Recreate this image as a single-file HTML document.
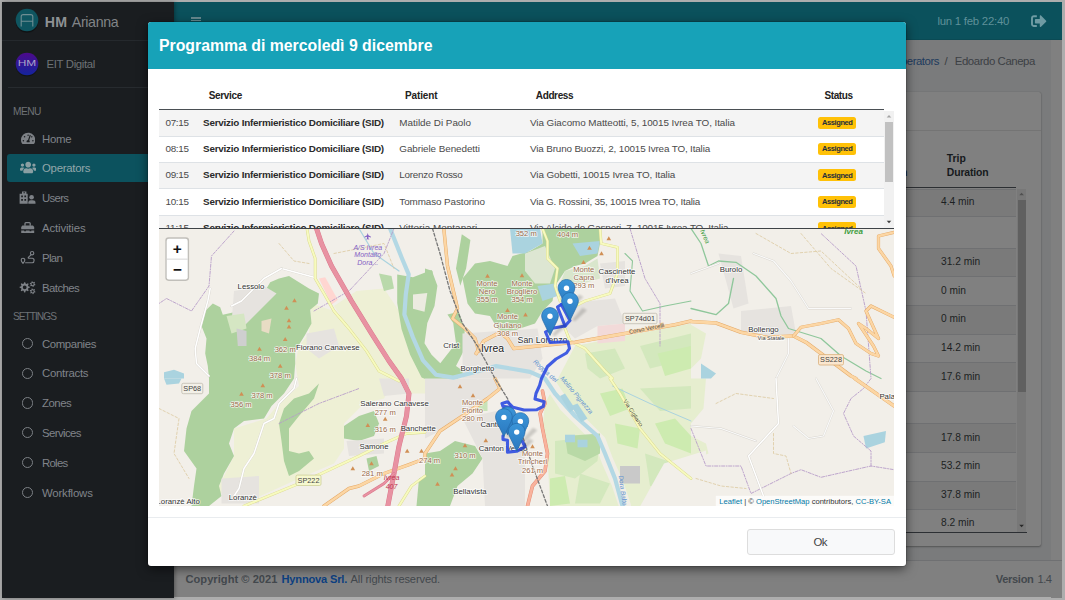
<!DOCTYPE html><html lang="it"><head><meta charset="utf-8"><title>HM Arianna</title><style>
html,body{margin:0;padding:0}body{width:1065px;height:600px;overflow:hidden;position:relative;background:#a9a9a9;font-family:"Liberation Sans", sans-serif}
.b{position:absolute;box-sizing:border-box}.t{position:absolute;white-space:nowrap;line-height:1}
svg{position:absolute;overflow:hidden}
</style></head><body>
<div class="b" style="left:0.00px;top:0.00px;width:1065.00px;height:600.00px;background:#adadad;"></div>
<div class="b" style="left:174.00px;top:40.00px;width:876.50px;height:519.60px;background:#7a7b7c;"></div>
<div class="b" style="left:1050.50px;top:40.00px;width:11.50px;height:557.50px;background:#808080;"></div>
<div class="b" style="left:174.00px;top:2.00px;width:888.00px;height:38.30px;background:#0b515c;border-bottom:1px solid #0a4a54"></div>
<div class="b" style="left:191.00px;top:16.90px;width:9.80px;height:1.70px;background:#66898f;"></div>
<div class="b" style="left:191.00px;top:19.90px;width:9.80px;height:1.60px;background:#66898f;"></div>
<span class="t" style="left:937.40px;top:15.75px;font-size:11.40px;color:#5f9099;letter-spacing:-0.242px;">lun 1 feb 22:40</span>
<svg style="left:1031px;top:14.6px" width="15.6" height="12.4" viewBox="0 0 512 408"><path fill="#6f9ba3" d="M497 221 329 389c-15 15-41 4.500-41-17v-96H152c-13.300 0-24-10.700-24-24v-96c0-13.300 10.700-24 24-24h136V36c0-21.400 25.900-32 41-17l168 168c9.300 9.400 9.300 24.600 0 34zM192 384v-40c0-6.600-5.400-12-12-12H96c-17.700 0-32-14.300-32-32V108c0-17.700 14.300-32 32-32h84c6.600 0 12-5.400 12-12V24c0-6.600-5.400-12-12-12H96C43 12 0 55 0 108v192c0 53 43 96 96 96h84c6.600 0 12-5.400 12-12z"/></svg>
<span class="t" style="left:892.50px;top:56.35px;font-size:11.40px;color:#1d3a5c;letter-spacing:-0.465px;">Operators</span>
<span class="t" style="left:944.50px;top:56.35px;font-size:11.40px;color:#3a3e42;">/</span>
<span class="t" style="left:954.80px;top:56.35px;font-size:11.40px;color:#3c4044;letter-spacing:-0.429px;">Edoardo Canepa</span>
<div class="b" style="left:200.00px;top:91.50px;width:840.80px;height:454.30px;background:#808080;border-radius:2px;box-shadow:0 0 1px rgba(0,0,0,.25),0 1px 2px rgba(0,0,0,.3)"></div>
<div class="b" style="left:200.00px;top:129.60px;width:840.80px;height:0.80px;background:#747474;"></div>
<span class="t" style="left:946.80px;top:153.50px;font-size:10.40px;color:#16191c;font-weight:700;">Trip</span>
<span class="t" style="left:946.80px;top:168.00px;font-size:10.40px;color:#16191c;font-weight:700;letter-spacing:-0.132px;">Duration</span>
<span class="t" style="left:901.00px;top:168.00px;font-size:10.40px;color:#16191c;font-weight:700;">n</span>
<div class="b" style="left:880.00px;top:187.20px;width:135.50px;height:1.30px;background:#2c2f33;"></div>
<div class="b" style="left:880.00px;top:188.50px;width:135.50px;height:27.00px;background:#7a7a7a;border-top:1px solid #6f7072"></div>
<span class="t" style="left:941.00px;top:196.97px;font-size:10.20px;color:#1c1f22;">4.4 min</span>
<div class="b" style="left:880.00px;top:215.50px;width:135.50px;height:32.20px;background:#808080;border-top:1px solid #6f7072"></div>
<div class="b" style="left:880.00px;top:247.70px;width:135.50px;height:28.50px;background:#7a7a7a;border-top:1px solid #6f7072"></div>
<span class="t" style="left:941.00px;top:256.92px;font-size:10.20px;color:#1c1f22;">31.2 min</span>
<div class="b" style="left:880.00px;top:276.20px;width:135.50px;height:28.80px;background:#808080;border-top:1px solid #6f7072"></div>
<span class="t" style="left:941.00px;top:285.57px;font-size:10.20px;color:#1c1f22;">0 min</span>
<div class="b" style="left:880.00px;top:305.00px;width:135.50px;height:28.60px;background:#7a7a7a;border-top:1px solid #6f7072"></div>
<span class="t" style="left:941.00px;top:314.27px;font-size:10.20px;color:#1c1f22;">0 min</span>
<div class="b" style="left:880.00px;top:333.60px;width:135.50px;height:28.70px;background:#808080;border-top:1px solid #6f7072"></div>
<span class="t" style="left:941.00px;top:342.92px;font-size:10.20px;color:#1c1f22;">14.2 min</span>
<div class="b" style="left:880.00px;top:362.30px;width:135.50px;height:28.70px;background:#7a7a7a;border-top:1px solid #6f7072"></div>
<span class="t" style="left:941.00px;top:371.62px;font-size:10.20px;color:#1c1f22;">17.6 min</span>
<div class="b" style="left:880.00px;top:391.00px;width:135.50px;height:32.20px;background:#808080;border-top:1px solid #6f7072"></div>
<div class="b" style="left:880.00px;top:423.20px;width:135.50px;height:28.80px;background:#7a7a7a;border-top:1px solid #6f7072"></div>
<span class="t" style="left:941.00px;top:432.57px;font-size:10.20px;color:#1c1f22;">17.8 min</span>
<div class="b" style="left:880.00px;top:452.00px;width:135.50px;height:28.60px;background:#808080;border-top:1px solid #6f7072"></div>
<span class="t" style="left:941.00px;top:461.27px;font-size:10.20px;color:#1c1f22;">53.2 min</span>
<div class="b" style="left:880.00px;top:480.60px;width:135.50px;height:28.60px;background:#7a7a7a;border-top:1px solid #6f7072"></div>
<span class="t" style="left:941.00px;top:489.87px;font-size:10.20px;color:#1c1f22;">37.8 min</span>
<div class="b" style="left:880.00px;top:509.20px;width:135.50px;height:23.20px;background:#808080;border-top:1px solid #6f7072"></div>
<span class="t" style="left:941.00px;top:517.97px;font-size:10.20px;color:#1c1f22;">8.2 min</span>
<div class="b" style="left:880.00px;top:532.20px;width:147.00px;height:1.00px;background:#2c2f33;"></div>
<div class="b" style="left:1017.00px;top:188.60px;width:9.20px;height:343.60px;background:#787878;"></div>
<div class="b" style="left:1017.60px;top:199.70px;width:8.00px;height:192.10px;background:#606060;"></div>
<svg style="left:1017px;top:189px" width="9.200" height="10" viewBox="0 0 9.200 10"><path d="M2.300 6.200 4.600 3.800 6.900 6.200z" fill="#505050"/></svg>
<svg style="left:1017px;top:521px" width="9.200" height="10" viewBox="0 0 9.200 10"><path d="M2.300 3.800 4.600 6.200 6.900 3.800z" fill="#282828"/></svg>
<div class="b" style="left:174.00px;top:559.60px;width:888.00px;height:37.90px;background:#808080;border-top:1px solid #6f7072"></div>
<span class="t" style="left:185.50px;top:574.00px;font-size:11.10px;color:#43484d;font-weight:700;letter-spacing:0.034px;">Copyright © 2021</span>
<span class="t" style="left:281.50px;top:574.00px;font-size:11.10px;color:#0c3f80;font-weight:700;letter-spacing:-0.179px;">Hynnova Srl.</span>
<span class="t" style="left:350.60px;top:574.00px;font-size:11.10px;color:#43484d;letter-spacing:-0.126px;">All rights reserved.</span>
<span class="t" style="left:995.70px;top:574.00px;font-size:11.10px;color:#43484d;font-weight:700;letter-spacing:-0.315px;">Version</span>
<span class="t" style="left:1037.50px;top:574.00px;font-size:11.10px;color:#43484d;letter-spacing:-0.544px;">1.4</span>
<div class="b" style="left:2.00px;top:2.00px;width:172.00px;height:595.50px;background:#1a1d20;box-shadow:1px 0 4px rgba(0,0,0,.35)"></div>
<div class="b" style="left:2.00px;top:40.20px;width:172.00px;height:0.80px;background:#25292d;"></div>
<div class="b" style="left:7.50px;top:86.60px;width:166.50px;height:0.80px;background:#272b2f;"></div>
<svg style="left:14px;top:7.300px" width="26" height="28" viewBox="0 0 26 28"><circle cx="13" cy="14.500" r="11.300" fill="#000" opacity=".35"/><circle cx="13" cy="13" r="11.300" fill="#0f5560"/><path d="M7.200 19.400V9.600q0-2 2-2h7.600q2 0 2 2v9.800M7.200 14.200h11.600" fill="none" stroke="#6f8e93" stroke-width="1.100"/></svg>
<span class="t" style="left:44.80px;top:14.98px;font-size:14.20px;color:#8e9194;font-weight:700;letter-spacing:0.308px;">HM</span>
<span class="t" style="left:71.80px;top:14.98px;font-size:14.20px;color:#818487;letter-spacing:-0.350px;">Arianna</span>
<svg style="left:14px;top:50.500px" width="26" height="28" viewBox="0 0 26 28"><defs><linearGradient id="ug" x1="0" y1="0" x2="0" y2="1"><stop offset="0" stop-color="#4d0a8c"/><stop offset="1" stop-color="#14249c"/></linearGradient></defs><circle cx="13" cy="14.300" r="11.300" fill="#000" opacity=".3"/><circle cx="13" cy="13" r="11.300" fill="url(#ug)"/><text x="13" y="15.400" font-family="Liberation Sans, sans-serif" font-size="8.200" text-anchor="middle" fill="#a9a3c9" textLength="18.500" lengthAdjust="spacingAndGlyphs">HM</text></svg>
<span class="t" style="left:46.50px;top:59.15px;font-size:11.40px;color:#6e7276;letter-spacing:-0.352px;">EIT Digital</span>
<span class="t" style="left:13.00px;top:106.67px;font-size:10.20px;color:#6e7276;letter-spacing:-0.508px;">MENU</span>
<span class="t" style="left:13.00px;top:311.57px;font-size:10.20px;color:#6e7276;letter-spacing:-1.001px;">SETTINGS</span>
<div class="b" style="left:7.00px;top:154.20px;width:160.50px;height:27.70px;background:#0c525e;border-radius:3px"></div>
<span class="t" style="left:42.00px;top:133.75px;font-size:11.40px;color:#80848a;letter-spacing:-0.253px;">Home</span>
<span class="t" style="left:42.00px;top:163.35px;font-size:11.40px;color:#93a7ab;letter-spacing:-0.265px;">Operators</span>
<span class="t" style="left:42.00px;top:193.15px;font-size:11.40px;color:#80848a;letter-spacing:-0.694px;">Users</span>
<span class="t" style="left:42.00px;top:222.95px;font-size:11.40px;color:#80848a;letter-spacing:-0.148px;">Activities</span>
<span class="t" style="left:42.00px;top:252.75px;font-size:11.40px;color:#80848a;letter-spacing:-0.629px;">Plan</span>
<span class="t" style="left:42.00px;top:282.55px;font-size:11.40px;color:#80848a;letter-spacing:-0.570px;">Batches</span>
<span class="t" style="left:42.00px;top:338.65px;font-size:11.40px;color:#80848a;letter-spacing:-0.407px;">Companies</span>
<div class="b" style="left:21.700px;top:337.80px;width:11.200px;height:11.200px;border:1.300px solid #7d8186;border-radius:50%"></div>
<span class="t" style="left:42.00px;top:368.45px;font-size:11.40px;color:#80848a;letter-spacing:-0.276px;">Contracts</span>
<div class="b" style="left:21.700px;top:367.60px;width:11.200px;height:11.200px;border:1.300px solid #7d8186;border-radius:50%"></div>
<span class="t" style="left:42.00px;top:398.25px;font-size:11.40px;color:#80848a;letter-spacing:-0.497px;">Zones</span>
<div class="b" style="left:21.700px;top:397.40px;width:11.200px;height:11.200px;border:1.300px solid #7d8186;border-radius:50%"></div>
<span class="t" style="left:42.00px;top:428.05px;font-size:11.40px;color:#80848a;letter-spacing:-0.614px;">Services</span>
<div class="b" style="left:21.700px;top:427.20px;width:11.200px;height:11.200px;border:1.300px solid #7d8186;border-radius:50%"></div>
<span class="t" style="left:42.00px;top:457.85px;font-size:11.40px;color:#80848a;letter-spacing:-0.729px;">Roles</span>
<div class="b" style="left:21.700px;top:457.00px;width:11.200px;height:11.200px;border:1.300px solid #7d8186;border-radius:50%"></div>
<span class="t" style="left:42.00px;top:487.65px;font-size:11.40px;color:#80848a;letter-spacing:-0.185px;">Workflows</span>
<div class="b" style="left:21.700px;top:486.80px;width:11.200px;height:11.200px;border:1.300px solid #7d8186;border-radius:50%"></div>
<svg style="left:20.700px;top:131.51px" width="14.30" height="12.71" viewBox="0 0 576 512"><path fill="#7d8186" d="M288 32C128.940 32 0 160.940 0 320c0 52.800 14.250 102.260 39.060 144.800 5.610 9.620 16.300 15.200 27.440 15.200h443c11.140 0 21.830-5.580 27.440-15.200C561.750 422.260 576 372.800 576 320c0-159.060-128.940-288-288-288zm0 64c14.710 0 26.580 10.130 30.320 23.650-1.110 2.260-2.640 4.230-3.450 6.670l-9.220 27.670c-5.130 3.490-10.970 6.010-17.640 6.010-17.670 0-32-14.330-32-32S270.330 96 288 96zM96 384c-17.670 0-32-14.330-32-32s14.330-32 32-32 32 14.330 32 32-14.330 32-32 32zm48-160c-17.670 0-32-14.330-32-32s14.330-32 32-32 32 14.330 32 32-14.330 32-32 32zm246.770-72.410l-61.330 184C343.130 347.330 352 364.540 352 384c0 11.720-3.380 22.550-8.880 32H232.880c-5.500-9.450-8.880-20.280-8.880-32 0-33.940 26.500-61.430 59.900-63.590l61.340-184.010c4.170-12.560 17.730-19.450 30.360-15.170 12.570 4.190 19.350 17.790 15.170 30.360zm14.660 57.200l15.520-46.550c3.470-1.290 7.130-2.230 11.050-2.230 17.670 0 32 14.330 32 32s-14.330 32-32 32c-11.380-.010-20.890-6.280-26.570-15.220zM480 384c-17.670 0-32-14.330-32-32s14.330-32 32-32 32 14.330 32 32-14.330 32-32 32z"/></svg>
<svg style="left:19.600px;top:161.28px" width="16.40" height="13.12" viewBox="0 0 640 512"><path fill="#8a9fa3" d="M96 224c35.300 0 64-28.700 64-64s-28.700-64-64-64-64 28.700-64 64 28.700 64 64 64zm448 0c35.300 0 64-28.700 64-64s-28.700-64-64-64-64 28.700-64 64 28.700 64 64 64zm32 32h-64c-17.600 0-33.500 7.100-45.100 18.600 40.300 22.100 68.900 62 75.100 109.400h66c17.700 0 32-14.300 32-32v-32c0-35.300-28.700-64-64-64zm-256 0c61.900 0 112-50.100 112-112S381.900 32 320 32 208 82.100 208 144s50.100 112 112 112zm76.800 32h-8.300c-20.800 10-43.900 16-68.500 16s-47.600-6-68.500-16h-8.300C179.600 288 128 339.600 128 403.200V432c0 26.500 21.500 48 48 48h288c26.500 0 48-21.500 48-48v-28.800c0-63.600-51.600-115.200-115.200-115.200zm-223.700-13.400C161.500 263.100 145.600 256 128 256H64c-35.300 0-64 28.700-64 64v32c0 17.700 14.300 32 32 32h65.900c6.300-47.400 34.900-87.300 75.200-109.400z"/></svg>
<svg style="left:19px;top:190px" width="18" height="15" viewBox="0 0 18 15"><path fill="#7d8186" fill-rule="evenodd" d="M3 1.600h4.400v2.200H8.700v9.900H.6V3.800H3z M2.200 5.600h1.700v1.700H2.200z M5.400 5.600h1.700v1.700H5.400z M2.200 9h1.700v1.700H2.200z M5.400 9h1.700v1.700H5.400z M4.500 2.200h1.400v1H4.500z"/><circle cx="12.600" cy="7.200" r="2.300" fill="#7d8186"/><path fill="#7d8186" d="M9.300 13.700v-1.200q0-2.300 2.300-2.300h2q2.900 0 2.900 2.300v1.200z"/></svg>
<svg style="left:20px;top:220px" width="16" height="15" viewBox="0 0 16 15"><path fill="none" stroke="#7d8186" stroke-width="1.300" d="M5 5.800V3.500q0-.9.900-.9h3.400q.9 0 .9.900v2.300"/><path fill="#7d8186" d="M2.400 5.500h10.600l1.200 1.400v2.300H1.200V6.900z M1.200 10.400h3v.9h1.700v-.9h3.700v.9h1.700v-.9h2.900v2.700H1.200z"/></svg>
<svg style="left:20px;top:250px" width="16" height="15" viewBox="0 0 16 15"><g fill="none" stroke="#7d8186" stroke-width="1.150" stroke-linecap="round" stroke-linejoin="round"><circle cx="12.100" cy="3.200" r="1.700"/><path d="M11 4.800 8.600 7.200q-.9 1 .5 1h3.100q1.900 0 1.900 2.200t-1.900 2.400H5.600"/><path d="M3 13.400Q1.100 11.300 1.200 10a1.800 1.800 0 0 1 3.600 0Q4.900 11.300 3 13.400z"/></g></svg>
<svg style="left:19px;top:280px" width="18" height="15" viewBox="0 0 18 15"><path fill="#7d8186" fill-rule="evenodd" d="M10.78 6.80L10.78 7.80L9.24 8.37L8.96 9.04L9.64 10.54L8.94 11.24L7.44 10.56L6.77 10.84L6.20 12.38L5.20 12.38L4.63 10.84L3.96 10.56L2.46 11.24L1.76 10.54L2.44 9.04L2.16 8.37L0.62 7.80L0.62 6.80L2.16 6.23L2.44 5.56L1.76 4.06L2.46 3.36L3.96 4.04L4.63 3.76L5.20 2.22L6.20 2.22L6.77 3.76L7.44 4.04L8.94 3.36L9.64 4.06L8.96 5.56L9.24 6.23zM3.80 7.30a1.90 1.90 0 1 0 3.80 0a1.90 1.90 0 1 0 -3.80 0zM16.46 4.59L16.23 5.31L15.14 5.38L14.76 5.73L14.61 6.82L13.87 6.99L13.26 6.07L12.76 5.92L11.75 6.33L11.23 5.78L11.72 4.79L11.61 4.29L10.74 3.61L10.97 2.89L12.06 2.82L12.44 2.47L12.59 1.38L13.33 1.21L13.94 2.13L14.44 2.28L15.45 1.87L15.97 2.42L15.48 3.41L15.59 3.91zM12.50 4.10a1.10 1.10 0 1 0 2.20 0a1.10 1.10 0 1 0 -2.20 0zM16.46 11.79L16.23 12.51L15.14 12.58L14.76 12.93L14.61 14.02L13.87 14.19L13.26 13.27L12.76 13.12L11.75 13.53L11.23 12.98L11.72 11.99L11.61 11.49L10.74 10.81L10.97 10.09L12.06 10.02L12.44 9.67L12.59 8.58L13.33 8.41L13.94 9.33L14.44 9.48L15.45 9.07L15.97 9.62L15.48 10.61L15.59 11.11zM12.50 11.30a1.10 1.10 0 1 0 2.20 0a1.10 1.10 0 1 0 -2.20 0z"/></svg>
<div class="b" style="left:147.50px;top:21.50px;width:758.80px;height:544.80px;background:#fff;border-radius:3px;box-shadow:0 3px 11px rgba(0,0,0,.55),0 0 0 .5px rgba(0,0,0,.25)"></div>
<div class="b" style="left:147.50px;top:21.50px;width:758.80px;height:47.50px;background:#17a2b8;border-radius:3px 3px 0 0"></div>
<span class="t" style="left:159.00px;top:37.83px;font-size:15.80px;color:#fff;font-weight:700;letter-spacing:0.012px;">Programma di mercoledì 9 dicembre</span>
<span class="t" style="left:208.80px;top:90.83px;font-size:10.00px;color:#222;font-weight:700;letter-spacing:-0.355px;">Service</span>
<span class="t" style="left:404.90px;top:90.83px;font-size:10.00px;color:#222;font-weight:700;letter-spacing:-0.106px;">Patient</span>
<span class="t" style="left:535.80px;top:90.83px;font-size:10.00px;color:#222;font-weight:700;letter-spacing:-0.374px;">Address</span>
<span class="t" style="left:824.40px;top:90.83px;font-size:10.00px;color:#222;font-weight:700;letter-spacing:-0.361px;">Status</span>
<div class="b" style="left:159.00px;top:108.80px;width:724.60px;height:1.40px;background:#4a4f54;"></div>
<div class="b" style="left:159px;top:110.200px;width:735.250px;height:118.300px;overflow:hidden">
<div class="b" style="left:0.00px;top:0.00px;width:724.60px;height:25.40px;background:#f4f4f4;"></div>
<span class="t" style="left:6.40px;top:7.82px;font-size:9.90px;color:#4a4a4a;letter-spacing:-0.255px;">07:15</span>
<span class="t" style="left:44.10px;top:7.82px;font-size:9.90px;color:#2a2a2a;font-weight:700;letter-spacing:-0.229px;">Servizio Infermieristico Domiciliare (SID)</span>
<span class="t" style="left:240.30px;top:7.82px;font-size:9.90px;color:#4a4a4a;letter-spacing:-0.012px;">Matilde Di Paolo</span>
<span class="t" style="left:371.00px;top:7.82px;font-size:9.90px;color:#4a4a4a;letter-spacing:-0.064px;">Via Giacomo Matteotti, 5, 10015 Ivrea TO, Italia</span>
<div class="b" style="left:659.40px;top:6.90px;width:37.40px;height:12.00px;background:#ffc107;border-radius:2.500px"></div>
<span class="t" style="left:663.00px;top:9.25px;font-size:7.50px;color:#1f2d3d;font-weight:700;letter-spacing:-0.407px;">Assigned</span>
<div class="b" style="left:0.00px;top:25.40px;width:724.60px;height:26.40px;background:#fff;border-top:1px solid #dee2e6"></div>
<span class="t" style="left:6.40px;top:33.72px;font-size:9.90px;color:#4a4a4a;letter-spacing:-0.255px;">08:15</span>
<span class="t" style="left:44.10px;top:33.72px;font-size:9.90px;color:#2a2a2a;font-weight:700;letter-spacing:-0.229px;">Servizio Infermieristico Domiciliare (SID)</span>
<span class="t" style="left:240.30px;top:33.72px;font-size:9.90px;color:#4a4a4a;letter-spacing:-0.073px;">Gabriele Benedetti</span>
<span class="t" style="left:371.00px;top:33.72px;font-size:9.90px;color:#4a4a4a;letter-spacing:-0.154px;">Via Bruno Buozzi, 2, 10015 Ivrea TO, Italia</span>
<div class="b" style="left:659.40px;top:32.80px;width:37.40px;height:12.00px;background:#ffc107;border-radius:2.500px"></div>
<span class="t" style="left:663.00px;top:35.15px;font-size:7.50px;color:#1f2d3d;font-weight:700;letter-spacing:-0.407px;">Assigned</span>
<div class="b" style="left:0.00px;top:51.80px;width:724.60px;height:26.40px;background:#f4f4f4;border-top:1px solid #dee2e6"></div>
<span class="t" style="left:6.40px;top:60.12px;font-size:9.90px;color:#4a4a4a;letter-spacing:-0.255px;">09:15</span>
<span class="t" style="left:44.10px;top:60.12px;font-size:9.90px;color:#2a2a2a;font-weight:700;letter-spacing:-0.229px;">Servizio Infermieristico Domiciliare (SID)</span>
<span class="t" style="left:240.30px;top:60.12px;font-size:9.90px;color:#4a4a4a;letter-spacing:-0.245px;">Lorenzo Rosso</span>
<span class="t" style="left:371.00px;top:60.12px;font-size:9.90px;color:#4a4a4a;letter-spacing:-0.104px;">Via Gobetti, 10015 Ivrea TO, Italia</span>
<div class="b" style="left:659.40px;top:59.20px;width:37.40px;height:12.00px;background:#ffc107;border-radius:2.500px"></div>
<span class="t" style="left:663.00px;top:61.55px;font-size:7.50px;color:#1f2d3d;font-weight:700;letter-spacing:-0.407px;">Assigned</span>
<div class="b" style="left:0.00px;top:78.20px;width:724.60px;height:26.60px;background:#fff;border-top:1px solid #dee2e6"></div>
<span class="t" style="left:6.40px;top:86.62px;font-size:9.90px;color:#4a4a4a;letter-spacing:-0.255px;">10:15</span>
<span class="t" style="left:44.10px;top:86.62px;font-size:9.90px;color:#2a2a2a;font-weight:700;letter-spacing:-0.229px;">Servizio Infermieristico Domiciliare (SID)</span>
<span class="t" style="left:240.30px;top:86.62px;font-size:9.90px;color:#4a4a4a;letter-spacing:-0.099px;">Tommaso Pastorino</span>
<span class="t" style="left:371.00px;top:86.62px;font-size:9.90px;color:#4a4a4a;letter-spacing:-0.212px;">Via G. Rossini, 35, 10015 Ivrea TO, Italia</span>
<div class="b" style="left:659.40px;top:85.70px;width:37.40px;height:12.00px;background:#ffc107;border-radius:2.500px"></div>
<span class="t" style="left:663.00px;top:88.05px;font-size:7.50px;color:#1f2d3d;font-weight:700;letter-spacing:-0.407px;">Assigned</span>
<div class="b" style="left:0.00px;top:104.80px;width:724.60px;height:26.40px;background:#f4f4f4;border-top:1px solid #dee2e6"></div>
<span class="t" style="left:6.40px;top:113.12px;font-size:9.90px;color:#4a4a4a;letter-spacing:-0.108px;">11:15</span>
<span class="t" style="left:44.10px;top:113.12px;font-size:9.90px;color:#2a2a2a;font-weight:700;letter-spacing:-0.229px;">Servizio Infermieristico Domiciliare (SID)</span>
<span class="t" style="left:240.30px;top:113.12px;font-size:9.90px;color:#4a4a4a;letter-spacing:0.044px;">Vittoria Montanari</span>
<span class="t" style="left:371.00px;top:113.12px;font-size:9.90px;color:#4a4a4a;letter-spacing:-0.146px;">Via Alcide de Gasperi, 7, 10015 Ivrea TO, Italia</span>
<div class="b" style="left:659.40px;top:112.20px;width:37.40px;height:12.00px;background:#ffc107;border-radius:2.500px"></div>
<span class="t" style="left:663.00px;top:114.55px;font-size:7.50px;color:#1f2d3d;font-weight:700;letter-spacing:-0.407px;">Assigned</span>
<div class="b" style="left:725.00px;top:0.60px;width:10.00px;height:117.00px;background:#f1f1f1;"></div>
<div class="b" style="left:726.20px;top:11.40px;width:7.60px;height:60.80px;background:#c1c1c1;"></div>
<svg style="left:725px;top:1px" width="10" height="10" viewBox="0 0 10 10"><path d="M2.700 6.400 5 3.900 7.300 6.400z" fill="#a3a3a3"/></svg>
<svg style="left:725px;top:107px" width="10" height="10" viewBox="0 0 10 10"><path d="M2.700 3.800 5 6.300 7.300 3.800z" fill="#404040"/></svg>
</div>
<div class="b" style="left:159.00px;top:227.60px;width:735.25px;height:1.00px;background:#3d4247;"></div>
<div class="b" style="left:159px;top:228.500px;width:735.250px;height:277px;overflow:hidden;background:#f2efe9">
<svg width="735.250" height="277" viewBox="159 228.500 735.250 277" font-family="Liberation Sans, sans-serif" style="left:0;top:0"><polygon points="311.5,303.0 334.0,310.5 349.0,328.0 366.5,350.5 379.0,370.5 394.0,378.0 394.0,378.0 384.0,398.0 364.0,403.0 344.0,423.0 344.0,448.0 334.0,463.0 299.0,478.0 244.0,503.0 216.5,490.5 234.0,455.5 234.0,428.0 266.5,418.0 279.0,403.0 299.0,385.5 295.2,363.0 299.0,345.5 309.0,333.0" fill="#eef0d5" />
<polygon points="334.0,305.5 356.5,290.5 384.0,288.0 399.0,310.5 409.0,335.5 425.0,358.0 425.0,378.0 425.0,393.0 409.0,393.0 399.0,378.0 379.0,370.5 366.5,350.5 349.0,328.0" fill="#eef0d5" />
<polygon points="575.0,345.5 625.0,335.5 691.0,323.0 691.0,324.2 706.0,333.0 701.0,358.0 691.0,368.0 691.0,378.0 706.0,378.0 703.5,408.0 691.0,423.0 691.0,435.5 706.0,443.0 708.5,453.0 691.0,460.5 691.0,505.5 550.0,505.5 547.5,453.0 542.5,428.0 545.0,403.0" fill="#e6eecf" />
<polygon points="212.8,303.0 220.2,306.8 222.8,314.2 234.0,311.8 244.0,303.0 259.0,300.5 266.5,288.0 270.2,281.8 279.0,278.0 289.0,275.5 299.0,281.8 309.0,288.0 319.0,293.0 317.8,303.0 310.2,309.2 311.5,323.0 305.2,334.2 299.0,344.2 295.2,348.0 295.2,363.0 294.0,378.0 284.0,393.0 271.5,405.5 264.0,418.0 244.0,420.5 234.0,428.0 229.0,443.0 234.0,455.5 224.0,473.0 219.0,485.5 221.5,495.5 209.0,505.5 191.5,505.5 194.0,485.5 196.5,468.0 184.0,450.5 186.5,428.0 191.5,410.5 209.0,393.0 209.0,378.0 207.8,365.5 205.2,353.0 206.5,338.0 201.5,325.5 205.2,310.5" fill="#add19e" />
<polygon points="284.0,408.0 294.0,398.0 309.0,393.0 319.0,383.0 314.0,398.0 299.0,415.5 289.0,428.0 289.0,450.5 299.0,453.0 309.0,450.5 314.0,458.0 299.0,470.5 289.0,475.5 284.0,460.5 281.5,440.5 279.0,423.0" fill="#add19e" />
<polygon points="344.0,425.5 359.0,415.5 374.0,410.5 379.0,423.0 374.0,435.5 359.0,440.5 344.0,438.0" fill="#add19e" />
<polygon points="366.5,458.0 376.5,455.5 379.0,465.5 369.0,470.5" fill="#add19e" />
<polygon points="397.2,273.9 413.0,276.7 431.6,269.6 437.4,285.3 434.5,305.4 427.3,322.6 424.5,342.7 431.6,354.2 440.3,362.8 456.0,342.7 453.2,322.6 447.4,314.0 458.9,311.2 464.6,328.4 464.6,348.4 456.0,365.6 464.6,371.4 456.0,380.0 435.9,382.8 421.6,377.1 410.1,354.2 401.5,328.4 397.2,302.6" fill="#add19e" />
<polygon points="461.8,233.7 470.4,239.5 466.1,268.1 460.3,285.3 456.0,268.1" fill="#add19e" />
<polygon points="379.0,273.0 391.5,275.5 394.0,288.0 384.0,290.5" fill="#b9d9ab" />
<polygon points="465.0,290.5 462.5,278.0 475.0,263.0 490.0,260.5 507.5,265.5 512.5,255.5 530.0,250.5 542.5,243.0 542.5,228.0 600.0,228.0 600.0,243.0 597.5,255.5 585.0,263.0 575.0,265.5 565.0,270.5 560.0,278.0 555.0,285.5 552.5,300.5 542.5,310.5 535.0,323.0 520.0,328.0 507.5,333.0 497.5,328.0 490.0,315.5 475.0,313.0 467.5,303.0" fill="#add19e" />
<polygon points="425.0,268.0 432.5,270.5 435.0,300.5 425.0,310.5" fill="#add19e" />
<polygon points="425.0,453.0 440.0,450.5 455.0,440.5 475.0,445.5 482.5,458.0 472.5,473.0 457.5,485.5 450.0,505.5 425.0,505.5" fill="#add19e" />
<polygon points="485.0,460.5 500.0,460.5 502.5,475.5 487.5,478.0" fill="#b9d9ab" />
<polygon points="450.0,393.0 487.5,393.0 487.5,410.5 450.0,410.5" fill="#c8e3b8" />
<polygon points="419.0,478.0 425.0,475.5 425.0,505.5 416.5,505.5" fill="#add19e" />
<polygon points="234.0,290.5 264.0,285.5 276.5,293.0 259.0,310.5 241.5,328.0 231.5,323.0" fill="#e6e3df" />
<polygon points="306.5,333.0 334.0,328.0 339.0,345.5 319.0,358.0 306.5,348.0" fill="#e6e3df" />
<polygon points="221.5,478.0 259.0,475.5 259.0,503.0 221.5,503.0" fill="#e6e3df" />
<polygon points="346.5,440.5 384.0,438.0 384.0,453.0 349.0,455.5" fill="#e6e3df" />
<polygon points="379.0,378.0 409.0,378.0 409.0,393.0 384.0,395.5" fill="#e6e3df" />
<polygon points="462.5,333.0 537.5,328.0 542.5,358.0 530.0,378.0 462.5,378.0" fill="#e6e3df" />
<polygon points="565.0,303.0 615.0,298.0 625.0,323.0 597.5,325.5 575.0,338.0 565.0,328.0" fill="#e6e3df" />
<polygon points="600.0,263.0 625.0,260.5 625.0,285.5 605.0,288.0" fill="#e6e3df" />
<polygon points="425.0,378.0 495.0,378.0 500.0,388.0 462.5,415.5 440.0,430.5 425.0,438.0" fill="#e6e3df" />
<polygon points="462.5,418.0 507.5,408.0 525.0,453.0 525.0,505.5 485.0,505.5 482.5,458.0" fill="#e6e3df" />
<polygon points="741.0,310.5 791.0,305.5 796.0,333.0 766.0,335.5 741.0,330.5" fill="#e6e3df" />
<polygon points="718.5,253.0 741.0,255.5 748.5,303.0 733.5,308.0" fill="#e6e3df" />
<polygon points="226.5,315.5 244.0,313.0 246.5,328.0 231.5,333.0" fill="#d5e6c3" />
<polygon points="261.5,320.5 271.5,318.0 269.0,333.0 261.5,330.5" fill="#e8dcc4" />
<polygon points="236.5,328.0 246.5,330.5 246.5,345.5 237.8,345.5" fill="#cfcfcf" />
<polygon points="555.0,440.5 600.0,435.5 597.5,460.5 575.0,478.0 555.0,473.0" fill="#d3e8bd" />
<polygon points="640.0,388.0 691.0,385.5 691.0,408.0 660.0,410.5" fill="#d3e8bd" />
<polygon points="580.0,473.0 610.0,483.0 600.0,503.0 575.0,503.0" fill="#d3e8bd" />
<polygon points="645.0,453.0 675.0,463.0 685.0,490.5 650.0,485.5" fill="#d3e8bd" />
<polygon points="585.0,353.0 615.0,348.0 625.0,368.0 600.0,378.0 587.5,368.0" fill="#d3e8bd" />
<polygon points="640.0,345.5 691.0,333.0 691.0,358.0 650.0,368.0" fill="#d3e8bd" />
<path d="M550.0 383.0 L565.0 405.5 L585.0 425.5 L600.0 440.5 L607.5 460.5 L617.5 483.0 L625.0 505.5" fill="none" stroke="#f1eee6" stroke-width="12" stroke-linejoin="round" stroke-linecap="round" stroke-linecap="butt"/>
<polygon points="664.0,463.0 706.0,450.0 706.0,506.0 640.0,506.0" fill="#f2efe9" />
<polygon points="600.0,393.0 622.5,388.0 630.0,408.0 610.0,415.5" fill="#cdebb0" />
<polygon points="615.0,423.0 640.0,428.0 637.5,448.0 617.5,443.0" fill="#cdebb0" />
<polygon points="550.0,478.0 565.0,475.5 570.0,503.0 550.0,505.5" fill="#cdebb0" />
<polygon points="655.0,423.0 675.0,418.0 691.0,435.5 691.0,453.0 665.0,443.0" fill="#cdebb0" />
<polygon points="657.5,353.0 691.0,345.5 691.0,368.0 665.0,375.5" fill="#cdebb0" />
<polygon points="565.0,435.5 600.0,433.0 600.0,453.0 585.0,460.5 567.5,453.0" fill="#b8d9a6" />
<polygon points="525.0,253.0 545.0,245.5 555.0,268.0 550.0,283.0 535.0,283.0 525.0,270.5" fill="#dde6d2" />
<polygon points="565.0,270.5 585.0,265.5 597.5,258.0 600.0,278.0 575.0,285.5 560.0,283.0" fill="#d9e6cc" />
<polygon points="413.0,293.9 427.3,292.5 424.5,311.2 413.0,308.3" fill="#ecebe0" />
<polygon points="164.0,371.8 174.0,369.2 184.0,373.0 184.0,378.0 164.0,378.0" fill="#aad3df" />
<polygon points="164.0,378.0 181.5,378.0 179.0,383.0 166.5,384.2" fill="#aad3df" />
<polygon points="510.0,228.0 540.0,228.0 542.5,243.0 525.0,253.0 512.5,253.0" fill="#aad3df" />
<polygon points="572.5,243.0 600.0,240.5 597.5,253.0 580.0,255.5" fill="#aad3df" />
<polygon points="537.5,285.5 555.0,283.0 557.5,295.5 542.5,300.5" fill="#aad3df" />
<polygon points="863.5,435.5 886.0,430.5 884.8,441.8 866.0,448.0" fill="#aad3df" />
<polygon points="701.0,363.0 716.0,373.0 711.0,378.0 701.0,378.0" fill="#aad3df" />
<path d="M359.0 228.0 L374.0 253.0 L399.0 270.5" fill="none" stroke="#aad3df" stroke-width="1.2" stroke-linejoin="round" stroke-linecap="round" />
<path d="M390.1 228.0 L401.5 256.7 L408.7 273.9 L405.8 293.9 L404.4 314.0 L413.0 337.0 L423.0 359.9 L435.9 374.2 L453.2 377.1 L470.4 372.8 L496.2 365.6 L513.4 368.5 L530.0 371.4 L545.0 378.0 L555.0 393.0 L575.0 415.5 L597.5 435.5 L605.0 453.0 L615.0 478.0 L622.5 505.5" fill="none" stroke="#b3d8e4" stroke-width="4.2" stroke-linejoin="round" stroke-linecap="round" />
<path d="M612.5 385.5 L650.0 403.0 L691.0 420.5" fill="none" stroke="#aad3df" stroke-width="1" stroke-linejoin="round" stroke-linecap="round" />
<polygon points="560.0,395.5 565.0,393.0 575.0,408.0 570.0,411.8" fill="#aad3df" />
<polygon points="571.2,405.5 577.5,403.0 587.5,418.0 581.2,421.8" fill="#aad3df" />
<polygon points="565.0,434.2 575.0,434.2 575.0,441.8 565.0,441.8" fill="#aad3df" />
<polygon points="577.5,439.2 587.5,439.2 587.5,446.8 577.5,446.8" fill="#aad3df" />
<polygon points="319.0,278.0 325.2,276.8 337.8,299.2 331.5,304.2" fill="#ffd6d1" />
<polygon points="597.5,325.5 625.0,323.0 625.0,340.5 597.5,343.0" fill="#f2dad9" />
<polygon points="620.0,465.5 640.0,465.5 640.0,483.0 620.0,483.0" fill="#c9c9c9" />
<path d="M691.0 228.0 L701.0 243.0 L708.5 265.5 L718.5 260.5 L736.0 261.8 L756.0 275.5 L776.0 298.0 L781.0 315.5 L788.5 328.0 L821.0 338.0 L841.0 355.5 L866.0 370.5 L881.0 378.0" fill="none" stroke="#8fc79b" stroke-width="1.3" stroke-linejoin="round" stroke-linecap="round" />
<path d="M733.5 278.0 L728.5 303.0 L716.0 314.2 L691.0 308.0" fill="none" stroke="#8fc79b" stroke-width="1.3" stroke-linejoin="round" stroke-linecap="round" />
<path d="M625.0 253.0 L632.5 260.5 L630.0 290.5 L642.5 310.5 L665.0 305.5 L691.0 300.5" fill="none" stroke="#8fc79b" stroke-width="1.1" stroke-linejoin="round" stroke-linecap="round" />
<path d="M234.0 230.5 L211.5 255.5 L209.0 285.5 L191.5 310.5 L166.5 298.0 L159.0 303.0" fill="none" stroke="#b79cc8" stroke-width="0.9" stroke-linejoin="round" stroke-linecap="round" stroke-dasharray="3 1.500 1 1.500"/>
<path d="M691.0 428.0 L706.0 465.5 L741.0 465.5 L751.0 493.0 L791.0 473.0 L801.0 469.2 L821.0 476.8 L871.0 465.5 L894.2 469.2" fill="none" stroke="#b79cc8" stroke-width="0.9" stroke-linejoin="round" stroke-linecap="round" stroke-dasharray="3 1.500 1 1.500"/>
<path d="M871.0 465.5 L871.0 450.5 L853.5 435.5 L843.5 413.0 L851.0 398.0 L863.5 388.0 L871.0 378.0 L871.0 378.0 L866.0 310.5 L856.0 265.5 L821.0 233.0" fill="none" stroke="#b79cc8" stroke-width="0.9" stroke-linejoin="round" stroke-linecap="round" stroke-dasharray="3 1.500 1 1.500"/>
<path d="M314.0 310.5 L349.0 290.5 L384.0 253.0 L394.0 228.0" fill="none" stroke="#b79cc8" stroke-width="0.9" stroke-linejoin="round" stroke-linecap="round" stroke-dasharray="3 1.500 1 1.500"/>
<path d="M279.0 423.0 L319.0 403.0 L359.0 388.0" fill="none" stroke="#b79cc8" stroke-width="0.9" stroke-linejoin="round" stroke-linecap="round" stroke-dasharray="3 1.500 1 1.500"/>
<path d="M630.0 228.0 L645.0 278.0 L660.0 303.0 L660.0 345.5" fill="none" stroke="#b79cc8" stroke-width="0.9" stroke-linejoin="round" stroke-linecap="round" stroke-dasharray="3 1.500 1 1.500"/>
<path d="M756.0 233.0 L791.0 253.0 L821.0 250.5 L861.0 288.0" fill="none" stroke="#dcc9a0" stroke-width="0.8" stroke-linejoin="round" stroke-linecap="round" stroke-dasharray="2.500 2"/>
<path d="M801.0 233.0 L831.0 268.0 L866.0 293.0" fill="none" stroke="#dcc9a0" stroke-width="0.8" stroke-linejoin="round" stroke-linecap="round" stroke-dasharray="2.500 2"/>
<path d="M716.0 403.0 L736.0 393.0 L773.5 398.0" fill="none" stroke="#dcc9a0" stroke-width="0.8" stroke-linejoin="round" stroke-linecap="round" stroke-dasharray="2.500 2"/>
<path d="M773.5 433.0 L773.5 453.0 L786.0 455.5 L791.0 473.0" fill="none" stroke="#dcc9a0" stroke-width="0.8" stroke-linejoin="round" stroke-linecap="round" stroke-dasharray="2.500 2"/>
<path d="M696.0 478.0 L721.0 485.5 L746.0 488.0" fill="none" stroke="#dcc9a0" stroke-width="0.8" stroke-linejoin="round" stroke-linecap="round" stroke-dasharray="2.500 2"/>
<path d="M279.0 243.0 L294.0 260.5 L309.0 263.0" fill="none" stroke="#dcc9a0" stroke-width="0.8" stroke-linejoin="round" stroke-linecap="round" stroke-dasharray="2.500 2"/>
<path d="M334.0 253.0 L384.0 243.0 L394.0 268.0" fill="none" stroke="#dcc9a0" stroke-width="0.8" stroke-linejoin="round" stroke-linecap="round" stroke-dasharray="2.500 2"/>
<path d="M159.0 408.0 L179.0 418.0 L174.0 453.0 L189.0 478.0" fill="none" stroke="#dcc9a0" stroke-width="0.8" stroke-linejoin="round" stroke-linecap="round" stroke-dasharray="2.500 2"/>
<path d="M691.0 425.5 L721.0 428.0 L756.0 440.5" fill="none" stroke="#d9d6cf" stroke-width="1.9" stroke-linejoin="round" stroke-linecap="round" />
<path d="M691.0 425.5 L721.0 428.0 L756.0 440.5" fill="none" stroke="#fafafa" stroke-width="1.2" stroke-linejoin="round" stroke-linecap="round" />
<path d="M793.5 425.5 L808.5 438.0 L823.5 435.5 L833.5 410.5 L816.0 378.0" fill="none" stroke="#d9d6cf" stroke-width="1.9" stroke-linejoin="round" stroke-linecap="round" />
<path d="M793.5 425.5 L808.5 438.0 L823.5 435.5 L833.5 410.5 L816.0 378.0" fill="none" stroke="#fafafa" stroke-width="1.2" stroke-linejoin="round" stroke-linecap="round" />
<path d="M753.5 253.0 L773.5 260.5 L791.0 280.5 L808.5 308.0 L851.0 308.0" fill="none" stroke="#d9d6cf" stroke-width="1.9" stroke-linejoin="round" stroke-linecap="round" />
<path d="M753.5 253.0 L773.5 260.5 L791.0 280.5 L808.5 308.0 L851.0 308.0" fill="none" stroke="#fafafa" stroke-width="1.2" stroke-linejoin="round" stroke-linecap="round" />
<path d="M691.0 273.0 L718.5 263.0" fill="none" stroke="#d9d6cf" stroke-width="1.9" stroke-linejoin="round" stroke-linecap="round" />
<path d="M691.0 273.0 L718.5 263.0" fill="none" stroke="#fafafa" stroke-width="1.2" stroke-linejoin="round" stroke-linecap="round" />
<path d="M788.5 338.0 L788.5 353.0 L776.0 378.0" fill="none" stroke="#d9d6cf" stroke-width="1.9" stroke-linejoin="round" stroke-linecap="round" />
<path d="M788.5 338.0 L788.5 353.0 L776.0 378.0" fill="none" stroke="#fafafa" stroke-width="1.2" stroke-linejoin="round" stroke-linecap="round" />
<path d="M281.5 268.0 L314.0 276.8" fill="none" stroke="#d6d3cc" stroke-width="2.2" stroke-linejoin="round" stroke-linecap="round" />
<path d="M281.5 268.0 L314.0 276.8" fill="none" stroke="#fff" stroke-width="1.5" stroke-linejoin="round" stroke-linecap="round" />
<path d="M281.5 268.0 L264.0 278.0 L241.5 300.5 L231.5 305.5" fill="none" stroke="#d6d3cc" stroke-width="2.2" stroke-linejoin="round" stroke-linecap="round" />
<path d="M281.5 268.0 L264.0 278.0 L241.5 300.5 L231.5 305.5" fill="none" stroke="#fff" stroke-width="1.5" stroke-linejoin="round" stroke-linecap="round" />
<path d="M210.2 288.0 L207.8 300.5 L200.2 328.0 L195.2 348.0 L196.5 363.0 L209.0 375.5" fill="none" stroke="#d6d3cc" stroke-width="2.2" stroke-linejoin="round" stroke-linecap="round" />
<path d="M210.2 288.0 L207.8 300.5 L200.2 328.0 L195.2 348.0 L196.5 363.0 L209.0 375.5" fill="none" stroke="#fff" stroke-width="1.5" stroke-linejoin="round" stroke-linecap="round" />
<path d="M296.5 378.0 L294.0 388.0 L279.0 403.0 L274.0 418.0 L264.0 423.0 L254.0 453.0 L244.0 468.0 L239.0 488.0 L234.0 495.5" fill="none" stroke="#d6d3cc" stroke-width="2.2" stroke-linejoin="round" stroke-linecap="round" />
<path d="M296.5 378.0 L294.0 388.0 L279.0 403.0 L274.0 418.0 L264.0 423.0 L254.0 453.0 L244.0 468.0 L239.0 488.0 L234.0 495.5" fill="none" stroke="#fff" stroke-width="1.5" stroke-linejoin="round" stroke-linecap="round" />
<path d="M776.0 378.0 L778.5 423.0 L748.5 455.5 L763.5 495.5" fill="none" stroke="#d6d3cc" stroke-width="2.2" stroke-linejoin="round" stroke-linecap="round" />
<path d="M776.0 378.0 L778.5 423.0 L748.5 455.5 L763.5 495.5" fill="none" stroke="#fff" stroke-width="1.5" stroke-linejoin="round" stroke-linecap="round" />
<path d="M307.0 228.0 L309.0 240.5 L315.2 258.0 L315.2 278.0 L324.0 293.0 L334.0 310.5 L349.0 328.0 L366.5 350.5 L379.0 370.5 L394.0 378.0 L399.0 380.5" fill="none" stroke="#d9d98a" stroke-width="2.8" stroke-linejoin="round" stroke-linecap="round" />
<path d="M307.0 228.0 L309.0 240.5 L315.2 258.0 L315.2 278.0 L324.0 293.0 L334.0 310.5 L349.0 328.0 L366.5 350.5 L379.0 370.5 L394.0 378.0 L399.0 380.5" fill="none" stroke="#f7fabf" stroke-width="2" stroke-linejoin="round" stroke-linecap="round" />
<path d="M244.0 505.5 L299.0 483.0 L321.5 473.0 L359.0 455.5 L384.0 443.0 L406.5 433.0 L425.0 431.8" fill="none" stroke="#d9d98a" stroke-width="2.8" stroke-linejoin="round" stroke-linecap="round" />
<path d="M244.0 505.5 L299.0 483.0 L321.5 473.0 L359.0 455.5 L384.0 443.0 L406.5 433.0 L425.0 431.8" fill="none" stroke="#f7fabf" stroke-width="2" stroke-linejoin="round" stroke-linecap="round" />
<path d="M399.0 505.5 L411.5 485.5 L425.0 475.5" fill="none" stroke="#d9d98a" stroke-width="2.8" stroke-linejoin="round" stroke-linecap="round" />
<path d="M399.0 505.5 L411.5 485.5 L425.0 475.5" fill="none" stroke="#f7fabf" stroke-width="2" stroke-linejoin="round" stroke-linecap="round" />
<path d="M542.5 228.0 L547.5 240.5 L547.5 258.0 L557.5 268.0 L555.0 285.5 L560.0 300.5" fill="none" stroke="#d9d98a" stroke-width="2.8" stroke-linejoin="round" stroke-linecap="round" />
<path d="M542.5 228.0 L547.5 240.5 L547.5 258.0 L557.5 268.0 L555.0 285.5 L560.0 300.5" fill="none" stroke="#f7fabf" stroke-width="2" stroke-linejoin="round" stroke-linecap="round" />
<path d="M600.0 228.0 L601.2 243.0 L617.5 246.8 L617.5 273.0 L610.0 293.0 L585.0 300.5 L570.0 308.0" fill="none" stroke="#d9d98a" stroke-width="2.8" stroke-linejoin="round" stroke-linecap="round" />
<path d="M600.0 228.0 L601.2 243.0 L617.5 246.8 L617.5 273.0 L610.0 293.0 L585.0 300.5 L570.0 308.0" fill="none" stroke="#f7fabf" stroke-width="2" stroke-linejoin="round" stroke-linecap="round" />
<path d="M565.0 328.0 L570.0 340.5 L585.0 348.0 L605.0 370.5 L612.5 378.0 L610.0 378.0 L620.0 393.0 L640.0 428.0 L660.0 453.0 L691.0 478.0" fill="none" stroke="#d9d98a" stroke-width="2.8" stroke-linejoin="round" stroke-linecap="round" />
<path d="M565.0 328.0 L570.0 340.5 L585.0 348.0 L605.0 370.5 L612.5 378.0 L610.0 378.0 L620.0 393.0 L640.0 428.0 L660.0 453.0 L691.0 478.0" fill="none" stroke="#f7fabf" stroke-width="2" stroke-linejoin="round" stroke-linecap="round" />
<path d="M443.8 228.0 L447.5 265.5 L457.5 308.0 L452.5 318.0 L465.0 328.0 L475.0 338.0 L478.8 350.5" fill="none" stroke="#e3a866" stroke-width="3.4000000000000004" stroke-linejoin="round" stroke-linecap="round" />
<path d="M443.8 228.0 L447.5 265.5 L457.5 308.0 L452.5 318.0 L465.0 328.0 L475.0 338.0 L478.8 350.5" fill="none" stroke="#fcd6a4" stroke-width="2.6" stroke-linejoin="round" stroke-linecap="round" />
<path d="M476.2 353.0 L483.8 340.5 L500.0 331.8 L507.5 338.0 L513.8 348.0 L550.0 344.2 L575.0 341.8 L625.0 333.0 L675.0 324.2 L691.0 320.5 L691.0 321.0 L716.0 322.5 L741.0 331.8 L766.0 336.8 L793.5 335.5 L806.0 341.8 L831.0 360.5 L851.0 375.5 L856.0 378.0 L854.8 378.0 L894.2 405.5" fill="none" stroke="#e3a866" stroke-width="3.5999999999999996" stroke-linejoin="round" stroke-linecap="round" />
<path d="M476.2 353.0 L483.8 340.5 L500.0 331.8 L507.5 338.0 L513.8 348.0 L550.0 344.2 L575.0 341.8 L625.0 333.0 L675.0 324.2 L691.0 320.5 L691.0 321.0 L716.0 322.5 L741.0 331.8 L766.0 336.8 L793.5 335.5 L806.0 341.8 L831.0 360.5 L851.0 375.5 L856.0 378.0 L854.8 378.0 L894.2 405.5" fill="none" stroke="#fcd6a4" stroke-width="2.8" stroke-linejoin="round" stroke-linecap="round" />
<path d="M793.5 335.5 L801.0 326.8 L821.0 323.0 L838.5 319.2 L848.5 328.0 L856.0 343.0 L871.0 353.0 L878.5 355.5 L873.5 345.5 L858.5 323.0 L866.0 328.0 L878.5 338.0 L866.0 310.5 L871.0 305.5 L894.2 316.8" fill="none" stroke="#e3a866" stroke-width="3.2" stroke-linejoin="round" stroke-linecap="round" />
<path d="M793.5 335.5 L801.0 326.8 L821.0 323.0 L838.5 319.2 L848.5 328.0 L856.0 343.0 L871.0 353.0 L878.5 355.5 L873.5 345.5 L858.5 323.0 L866.0 328.0 L878.5 338.0 L866.0 310.5 L871.0 305.5 L894.2 316.8" fill="none" stroke="#fcd6a4" stroke-width="2.4" stroke-linejoin="round" stroke-linecap="round" />
<path d="M894.2 231.8 L878.5 235.5 L878.5 248.0 L891.0 265.5 L894.2 275.5" fill="none" stroke="#e3a866" stroke-width="3.2" stroke-linejoin="round" stroke-linecap="round" />
<path d="M894.2 231.8 L878.5 235.5 L878.5 248.0 L891.0 265.5 L894.2 275.5" fill="none" stroke="#fcd6a4" stroke-width="2.4" stroke-linejoin="round" stroke-linecap="round" />
<path d="M324.0 505.5 L349.0 488.0 L359.0 485.5 L384.0 473.0 L409.0 464.2 L425.0 458.0 L425.0 453.0 L440.0 430.5 L462.5 415.5 L487.5 398.0 L500.0 388.0 L495.0 378.0" fill="none" stroke="#e3a866" stroke-width="3.4000000000000004" stroke-linejoin="round" stroke-linecap="round" />
<path d="M324.0 505.5 L349.0 488.0 L359.0 485.5 L384.0 473.0 L409.0 464.2 L425.0 458.0 L425.0 453.0 L440.0 430.5 L462.5 415.5 L487.5 398.0 L500.0 388.0 L495.0 378.0" fill="none" stroke="#fcd6a4" stroke-width="2.6" stroke-linejoin="round" stroke-linecap="round" />
<path d="M542.5 390.5 L545.0 403.0 L540.0 413.0 L542.5 428.0 L547.5 453.0 L545.0 470.5 L532.5 485.5 L527.5 505.5" fill="none" stroke="#e08a72" stroke-width="3.5999999999999996" stroke-linejoin="round" stroke-linecap="round" />
<path d="M542.5 390.5 L545.0 403.0 L540.0 413.0 L542.5 428.0 L547.5 453.0 L545.0 470.5 L532.5 485.5 L527.5 505.5" fill="none" stroke="#f9b29c" stroke-width="2.8" stroke-linejoin="round" stroke-linecap="round" />
<path d="M316.5 228.0 L321.5 243.0 L331.5 265.5 L351.5 300.5 L371.5 333.0 L389.0 360.5 L401.5 378.0 L409.0 393.0 L406.5 415.5 L399.0 445.5 L394.0 473.0 L387.8 505.5" fill="none" stroke="#d9768a" stroke-width="5.0" stroke-linejoin="round" stroke-linecap="round" />
<path d="M316.5 228.0 L321.5 243.0 L331.5 265.5 L351.5 300.5 L371.5 333.0 L389.0 360.5 L401.5 378.0 L409.0 393.0 L406.5 415.5 L399.0 445.5 L394.0 473.0 L387.8 505.5" fill="none" stroke="#e892a2" stroke-width="4.2" stroke-linejoin="round" stroke-linecap="round" />
<path d="M394.0 473.0 L384.0 483.0 L364.0 495.5" fill="none" stroke="#d9768a" stroke-width="2.8" stroke-linejoin="round" stroke-linecap="round" />
<path d="M394.0 473.0 L384.0 483.0 L364.0 495.5" fill="none" stroke="#e892a2" stroke-width="2" stroke-linejoin="round" stroke-linecap="round" />
<path d="M432.5 228.0 L440.0 253.0 L450.0 290.5 L462.5 323.0 L477.5 345.5 L495.0 378.0 L507.5 398.0 L520.0 428.0 L532.5 465.5 L547.5 505.5" fill="none" stroke="#777" stroke-width="1.3" stroke-linejoin="round" stroke-linecap="round" stroke-dasharray="3 2"/>
<text x="251.0" y="288.8" font-size="7.8" fill="#333" text-anchor="middle" stroke="#fff" stroke-opacity=".75" stroke-width="1.600" paint-order="stroke" >Lessolo</text>
<text x="327.8" y="349.5" font-size="7.8" fill="#333" text-anchor="middle" stroke="#fff" stroke-opacity=".75" stroke-width="1.600" paint-order="stroke" >Fiorano Canavese</text>
<text x="285.2" y="351.0" font-size="7.6" fill="#9a6a4a" text-anchor="middle" stroke="#fff" stroke-opacity=".75" stroke-width="1.600" paint-order="stroke" >362 m</text>
<text x="259.5" y="360.5" font-size="7.6" fill="#9a6a4a" text-anchor="middle" stroke="#fff" stroke-opacity=".75" stroke-width="1.600" paint-order="stroke" >384 m</text>
<text x="280.2" y="377.2" font-size="7.6" fill="#9a6a4a" text-anchor="middle" stroke="#fff" stroke-opacity=".75" stroke-width="1.600" paint-order="stroke" >378 m</text>
<text x="262.0" y="397.5" font-size="7.6" fill="#9a6a4a" text-anchor="middle" stroke="#fff" stroke-opacity=".75" stroke-width="1.600" paint-order="stroke" >378 m</text>
<text x="241.0" y="406.2" font-size="7.6" fill="#9a6a4a" text-anchor="middle" stroke="#fff" stroke-opacity=".75" stroke-width="1.600" paint-order="stroke" >356 m</text>
<text x="385.2" y="414.8" font-size="7.6" fill="#9a6a4a" text-anchor="middle" stroke="#fff" stroke-opacity=".75" stroke-width="1.600" paint-order="stroke" >277 m</text>
<text x="385.2" y="431.8" font-size="7.6" fill="#9a6a4a" text-anchor="middle" stroke="#fff" stroke-opacity=".75" stroke-width="1.600" paint-order="stroke" >316 m</text>
<text x="372.2" y="475.0" font-size="7.6" fill="#9a6a4a" text-anchor="middle" stroke="#fff" stroke-opacity=".75" stroke-width="1.600" paint-order="stroke" >281 m</text>
<text x="526.2" y="235.5" font-size="7.6" fill="#9a6a4a" text-anchor="middle" stroke="#fff" stroke-opacity=".75" stroke-width="1.600" paint-order="stroke" >352 m</text>
<text x="567.5" y="236.8" font-size="7.6" fill="#9a6a4a" text-anchor="middle" stroke="#fff" stroke-opacity=".75" stroke-width="1.600" paint-order="stroke" >404 m</text>
<text x="465.0" y="457.5" font-size="7.6" fill="#9a6a4a" text-anchor="middle" stroke="#fff" stroke-opacity=".75" stroke-width="1.600" paint-order="stroke" >310 m</text>
<path d="M294.5 297.7l2.300 4h-4.600z" fill="#d08f55"/>
<path d="M286.5 305.2l2.300 4h-4.600z" fill="#d08f55"/>
<path d="M289.0 317.7l2.300 4h-4.600z" fill="#d08f55"/>
<path d="M289.0 323.9l2.300 4h-4.600z" fill="#d08f55"/>
<path d="M285.2 336.4l2.300 4h-4.600z" fill="#d08f55"/>
<path d="M259.5 346.2l2.300 4h-4.600z" fill="#d08f55"/>
<path d="M280.2 363.2l2.300 4h-4.600z" fill="#d08f55"/>
<path d="M262.8 382.7l2.300 4h-4.600z" fill="#d08f55"/>
<path d="M241.5 391.2l2.300 4h-4.600z" fill="#d08f55"/>
<path d="M385.2 416.2l2.300 4h-4.600z" fill="#d08f55"/>
<path d="M367.8 422.4l2.300 4h-4.600z" fill="#d08f55"/>
<path d="M407.2 448.2l2.300 4h-4.600z" fill="#d08f55"/>
<path d="M421.5 448.2l2.300 4h-4.600z" fill="#d08f55"/>
<path d="M371.5 460.7l2.300 4h-4.600z" fill="#d08f55"/>
<path d="M352.8 465.7l2.300 4h-4.600z" fill="#d08f55"/>
<path d="M487.5 273.2l2.300 4h-4.600z" fill="#d08f55"/>
<path d="M522.0 272.7l2.300 4h-4.600z" fill="#d08f55"/>
<path d="M507.5 307.4l2.300 4h-4.600z" fill="#d08f55"/>
<path d="M525.5 311.9l2.300 4h-4.600z" fill="#d08f55"/>
<path d="M608.8 235.7l2.300 4h-4.600z" fill="#d08f55"/>
<path d="M589.5 245.2l2.300 4h-4.600z" fill="#d08f55"/>
<path d="M601.5 250.7l2.300 4h-4.600z" fill="#d08f55"/>
<path d="M583.5 259.4l2.300 4h-4.600z" fill="#d08f55"/>
<path d="M460.0 383.7l2.300 4h-4.600z" fill="#d08f55"/>
<path d="M473.0 392.7l2.300 4h-4.600z" fill="#d08f55"/>
<path d="M485.8 437.7l2.300 4h-4.600z" fill="#d08f55"/>
<path d="M465.0 442.7l2.300 4h-4.600z" fill="#d08f55"/>
<path d="M532.5 443.7l2.300 4h-4.600z" fill="#d08f55"/>
<path d="M455.5 465.7l2.300 4h-4.600z" fill="#d08f55"/>
<path d="M452.0 471.9l2.300 4h-4.600z" fill="#d08f55"/>
<path d="M437.5 481.2l2.300 4h-4.600z" fill="#d08f55"/>
<text x="492.5" y="351.2" font-size="10.4" fill="#222" text-anchor="middle" stroke="#fff" stroke-opacity=".75" stroke-width="1.600" paint-order="stroke" >Ivrea</text>
<text x="451.2" y="347.5" font-size="7.8" fill="#333" text-anchor="middle" stroke="#fff" stroke-opacity=".75" stroke-width="1.600" paint-order="stroke" >Crist</text>
<text x="542.5" y="342.5" font-size="8.8" fill="#333" text-anchor="middle" stroke="#fff" stroke-opacity=".75" stroke-width="1.600" paint-order="stroke" >San Lorenzo</text>
<text x="477.5" y="370.5" font-size="7.8" fill="#333" text-anchor="middle" stroke="#fff" stroke-opacity=".75" stroke-width="1.600" paint-order="stroke" >Borghetto</text>
<text x="617.0" y="273.2" font-size="7.8" fill="#333" text-anchor="middle" stroke="#fff" stroke-opacity=".75" stroke-width="1.600" paint-order="stroke" >Cascinette</text>
<text x="617.0" y="282.8" font-size="7.8" fill="#333" text-anchor="middle" stroke="#fff" stroke-opacity=".75" stroke-width="1.600" paint-order="stroke" >d'Ivrea</text>
<text x="487.0" y="285.0" font-size="7.6" fill="#9a6a4a" text-anchor="middle" stroke="#fff" stroke-opacity=".75" stroke-width="1.600" paint-order="stroke" >Monte</text>
<text x="487.0" y="293.2" font-size="7.6" fill="#9a6a4a" text-anchor="middle" stroke="#fff" stroke-opacity=".75" stroke-width="1.600" paint-order="stroke" >Nero</text>
<text x="487.0" y="301.5" font-size="7.6" fill="#9a6a4a" text-anchor="middle" stroke="#fff" stroke-opacity=".75" stroke-width="1.600" paint-order="stroke" >355 m</text>
<text x="522.0" y="285.0" font-size="7.6" fill="#9a6a4a" text-anchor="middle" stroke="#fff" stroke-opacity=".75" stroke-width="1.600" paint-order="stroke" >Monte</text>
<text x="522.0" y="293.2" font-size="7.6" fill="#9a6a4a" text-anchor="middle" stroke="#fff" stroke-opacity=".75" stroke-width="1.600" paint-order="stroke" >Brogliero</text>
<text x="522.0" y="301.5" font-size="7.6" fill="#9a6a4a" text-anchor="middle" stroke="#fff" stroke-opacity=".75" stroke-width="1.600" paint-order="stroke" >354 m</text>
<text x="583.8" y="271.0" font-size="7.6" fill="#9a6a4a" text-anchor="middle" stroke="#fff" stroke-opacity=".75" stroke-width="1.600" paint-order="stroke" >Monte</text>
<text x="583.8" y="279.2" font-size="7.6" fill="#9a6a4a" text-anchor="middle" stroke="#fff" stroke-opacity=".75" stroke-width="1.600" paint-order="stroke" >Capra</text>
<text x="583.8" y="287.5" font-size="7.6" fill="#9a6a4a" text-anchor="middle" stroke="#fff" stroke-opacity=".75" stroke-width="1.600" paint-order="stroke" >293 m</text>
<text x="507.5" y="318.8" font-size="7.6" fill="#9a6a4a" text-anchor="middle" stroke="#fff" stroke-opacity=".75" stroke-width="1.600" paint-order="stroke" >Monte</text>
<text x="507.5" y="327.0" font-size="7.6" fill="#9a6a4a" text-anchor="middle" stroke="#fff" stroke-opacity=".75" stroke-width="1.600" paint-order="stroke" >Giuliano</text>
<text x="507.5" y="335.2" font-size="7.6" fill="#9a6a4a" text-anchor="middle" stroke="#fff" stroke-opacity=".75" stroke-width="1.600" paint-order="stroke" >308 m</text>
<text x="472.5" y="404.2" font-size="7.6" fill="#9a6a4a" text-anchor="middle" stroke="#fff" stroke-opacity=".75" stroke-width="1.600" paint-order="stroke" >Monte</text>
<text x="472.5" y="412.5" font-size="7.6" fill="#9a6a4a" text-anchor="middle" stroke="#fff" stroke-opacity=".75" stroke-width="1.600" paint-order="stroke" >Fiorito</text>
<text x="472.5" y="420.8" font-size="7.6" fill="#9a6a4a" text-anchor="middle" stroke="#fff" stroke-opacity=".75" stroke-width="1.600" paint-order="stroke" >280 m</text>
<text x="532.5" y="455.5" font-size="7.6" fill="#9a6a4a" text-anchor="middle" stroke="#fff" stroke-opacity=".75" stroke-width="1.600" paint-order="stroke" >Monte</text>
<text x="532.5" y="463.8" font-size="7.6" fill="#9a6a4a" text-anchor="middle" stroke="#fff" stroke-opacity=".75" stroke-width="1.600" paint-order="stroke" >Trincheri</text>
<text x="532.5" y="472.0" font-size="7.6" fill="#9a6a4a" text-anchor="middle" stroke="#fff" stroke-opacity=".75" stroke-width="1.600" paint-order="stroke" >261 m</text>
<rect x="623.0" y="312.8" width="34.0" height="10.400" rx="1.500" fill="#f3f0e7" stroke="#b9b5a8" stroke-width=".7"/>
<text x="640.0" y="320.6" font-size="7.300" fill="#444" text-anchor="middle">SP74d01</text>
<rect x="818.5" y="354.1" width="25.0" height="10.400" rx="1.500" fill="#fbe7cf" stroke="#d4a86e" stroke-width=".7"/>
<text x="831.0" y="361.9" font-size="7.300" fill="#444" text-anchor="middle">SS228</text>
<rect x="181.8" y="382.8" width="21.0" height="10.400" rx="1.500" fill="#f3f0e7" stroke="#b9b5a8" stroke-width=".7"/>
<text x="192.2" y="390.6" font-size="7.300" fill="#444" text-anchor="middle">SP68</text>
<rect x="296.0" y="474.6" width="25.0" height="10.400" rx="1.500" fill="#f6f8cf" stroke="#c9cc8e" stroke-width=".7"/>
<text x="308.5" y="482.4" font-size="7.300" fill="#444" text-anchor="middle">SP222</text>
<text x="731.0" y="271.8" font-size="7.8" fill="#333" text-anchor="middle" stroke="#fff" stroke-opacity=".75" stroke-width="1.600" paint-order="stroke" >Burolo</text>
<text x="763.5" y="331.8" font-size="7.8" fill="#333" text-anchor="middle" stroke="#fff" stroke-opacity=".75" stroke-width="1.600" paint-order="stroke" >Bollengo</text>
<text x="771.0" y="339.2" font-size="5.6" fill="#444" text-anchor="middle" stroke="#fff" stroke-opacity=".75" stroke-width="1.600" paint-order="stroke" >Via Statale</text>
<text x="887.2" y="398.5" font-size="7.8" fill="#333" text-anchor="middle" stroke="#fff" stroke-opacity=".75" stroke-width="1.600" paint-order="stroke" >Pala</text>
<text x="394.5" y="405.0" font-size="7.8" fill="#333" text-anchor="middle" stroke="#fff" stroke-opacity=".75" stroke-width="1.600" paint-order="stroke" >Salerano Canavese</text>
<text x="418.2" y="430.8" font-size="7.8" fill="#333" text-anchor="middle" stroke="#fff" stroke-opacity=".75" stroke-width="1.600" paint-order="stroke" >Banchette</text>
<text x="374.0" y="448.0" font-size="7.8" fill="#333" text-anchor="middle" stroke="#fff" stroke-opacity=".75" stroke-width="1.600" paint-order="stroke" >Samone</text>
<text x="242.8" y="499.2" font-size="7.8" fill="#333" text-anchor="middle" stroke="#fff" stroke-opacity=".75" stroke-width="1.600" paint-order="stroke" >Loranzè</text>
<text x="156.5" y="503.0" font-size="7.8" fill="#333" text-anchor="start" stroke="#fff" stroke-opacity=".75" stroke-width="1.600" paint-order="stroke" >Loranzè Alto</text>
<text x="419.0" y="462.5" font-size="7.6" fill="#9a6a4a" text-anchor="start" stroke="#fff" stroke-opacity=".75" stroke-width="1.600" paint-order="stroke" >274 m</text>
<text x="391.5" y="479.8" font-size="7" fill="#c0334d" text-anchor="middle" font-style="italic">Ivrea</text>
<text x="391.5" y="488.0" font-size="7" fill="#c0334d" text-anchor="middle" font-style="italic">407</text>
<text x="504.0" y="426.8" font-size="7.8" fill="#333" text-anchor="middle" stroke="#fff" stroke-opacity=".75" stroke-width="1.600" paint-order="stroke" >Canton Vigna</text>
<text x="503.0" y="450.0" font-size="7.8" fill="#333" text-anchor="middle" stroke="#fff" stroke-opacity=".75" stroke-width="1.600" paint-order="stroke" >Canton Vesco</text>
<text x="470.0" y="493.5" font-size="7.8" fill="#333" text-anchor="middle" stroke="#fff" stroke-opacity=".75" stroke-width="1.600" paint-order="stroke" >Bellavista</text>
<text x="367.8" y="249.0" font-size="7" fill="#8461c4" text-anchor="middle" font-style="italic">A/S Ivrea</text>
<text x="367.8" y="256.8" font-size="7" fill="#8461c4" text-anchor="middle" font-style="italic">Montalto</text>
<text x="367.8" y="264.5" font-size="7" fill="#8461c4" text-anchor="middle" font-style="italic">Dora...</text>
<path d="M367.700 232.500l.7 2.200 2.600 1.600v.8l-2.600-.8v1.600l.8.600v.6l-1.500-.4-1.500.4v-.6l.8-.6v-1.600l-2.600.8v-.8l2.600-1.600z" fill="#8461c4"/>
<text font-size="5.800" fill="#444" transform="translate(647 330) rotate(-11)" text-anchor="middle" stroke="#fcd6a4" stroke-width="1" paint-order="stroke">Corso Vercelli</text>
<text font-size="5.800" fill="#444" transform="translate(631.500 413.500) rotate(57)" text-anchor="middle" stroke="#f7fabf" stroke-width="1" paint-order="stroke">Via Cigliano</text>
<text font-size="6.400" fill="#5a8fd0" font-style="italic" transform="translate(575 396) rotate(50)" text-anchor="middle">Molino Pignezza</text>
<text font-size="6.400" fill="#5a8fd0" font-style="italic" transform="translate(544 372) rotate(42)" text-anchor="middle">Roggia del</text>
<text font-size="6.400" fill="#5a8fd0" font-style="italic" transform="translate(621 492) rotate(82)" text-anchor="middle">Dora Baltea</text>
<text font-size="8" fill="#3b9b3b" font-style="italic" font-weight="700" x="853.500" y="233.500" text-anchor="middle">Ivrea</text>
<text font-size="6.600" fill="#3b9b3b" font-style="italic" transform="translate(703 237) rotate(65)" text-anchor="middle">Ivrea</text>
<path d="M561.3 304.0 L570.0 320.0 L565.0 325.5 L552.3 327.8 L545.5 331.5 L550.0 342.0 L568.0 341.3 L569.5 348.0 L566.5 352.5 L556.0 358.5 L547.5 366.0 L541.5 378.0 L539.6 385.0 L536.0 393.0 L535.0 398.5 L544.2 401.3 L543.3 405.9 L536.9 409.2 L524.0 409.5 L513.0 406.8 L507.5 401.3 L502.0 403.0 L503.0 405.9 L509.4 406.8" fill="none" stroke="#2d4be1" stroke-width="3.1" stroke-linejoin="round" stroke-linecap="round" stroke-opacity=".9"/>
<path d="M561.3 304.0 L557.5 306.5 L565.0 325.5" fill="none" stroke="#2d4be1" stroke-width="3.1" stroke-linejoin="round" stroke-linecap="round" stroke-opacity=".9"/>
<path d="M503.0 435.2 L503.0 438.9 L507.5 439.8 L507.5 451.7 L516.7 450.8 L525.0 446.2 L522.2 440.7" fill="none" stroke="#2d4be1" stroke-width="3.1" stroke-linejoin="round" stroke-linecap="round" stroke-opacity=".9"/>
<defs><linearGradient id="mg" x1="0" y1="0" x2="0" y2="1"><stop offset="0" stop-color="#3b95d8"/><stop offset="1" stop-color="#2a78bf"/></linearGradient><filter id="mb" x="-50%" y="-50%" width="200%" height="200%"><feGaussianBlur stdDeviation=".9"/></filter><g id="mk"><path d="M2 -1.500L12.500 -13.500L17 -11L5 0Z" fill="#000" opacity=".16" filter="url(#mb)" transform="translate(0 .3)"/><path transform="translate(-8.750 -28.700) scale(.7)" d="M12.500 .6C5.900 .6 .6 5.900 .6 12.500c0 2.400 .8 5 2 7.300L12.500 40.400 22.400 19.800c1.200-2.300 2-4.900 2-7.300C24.400 5.900 19.100 .6 12.500 .6z" fill="url(#mg)" stroke="#2268a8" stroke-width="1"/><circle cx="0" cy="-19.600" r="2.700" fill="#fff"/></g></defs>
<use href="#mk" x="566.5" y="307.3"/>
<use href="#mk" x="570.0" y="320.4"/>
<use href="#mk" x="550.0" y="335.4"/>
<use href="#mk" x="507.5" y="434.6"/>
<use href="#mk" x="503.9" y="436.5"/>
<use href="#mk" x="520.4" y="440.5"/>
<use href="#mk" x="516.7" y="451.2"/>
<rect x="165.300" y="236.800" width="23.800" height="43.600" rx="3.300" fill="#000" opacity=".2"/>
<rect x="166.700" y="238.200" width="21" height="40.800" rx="2.200" fill="#fff"/>
<rect x="166.700" y="258.200" width="21" height=".8" fill="#ccc"/>
<text x="177.200" y="253.800" font-size="15.400" font-weight="700" text-anchor="middle" fill="#111">+</text>
<text x="177.200" y="274.200" font-size="15.400" font-weight="700" text-anchor="middle" fill="#111">−</text>
<rect x="715.800" y="495.300" width="178.500" height="10.300" fill="#fff" opacity=".72"/>
<text x="719.300" y="503" font-size="7.600" fill="#333" textLength="171.700" lengthAdjust="spacing"><tspan fill="#0078a8">Leaflet</tspan> | © <tspan fill="#0078a8">OpenStreetMap</tspan> contributors, <tspan fill="#0078a8">CC-BY-SA</tspan></text></svg>
</div>
<div class="b" style="left:147.50px;top:517.00px;width:758.80px;height:1.00px;background:#e9ecef;"></div>
<div class="b" style="left:746.70px;top:528.80px;width:148.00px;height:25.90px;background:#f8f9fa;border:1px solid #ddd;border-radius:3px"></div>
<span class="t" style="left:813.50px;top:537.15px;font-size:11.40px;color:#444;letter-spacing:-0.534px;">Ok</span>
</body></html>
